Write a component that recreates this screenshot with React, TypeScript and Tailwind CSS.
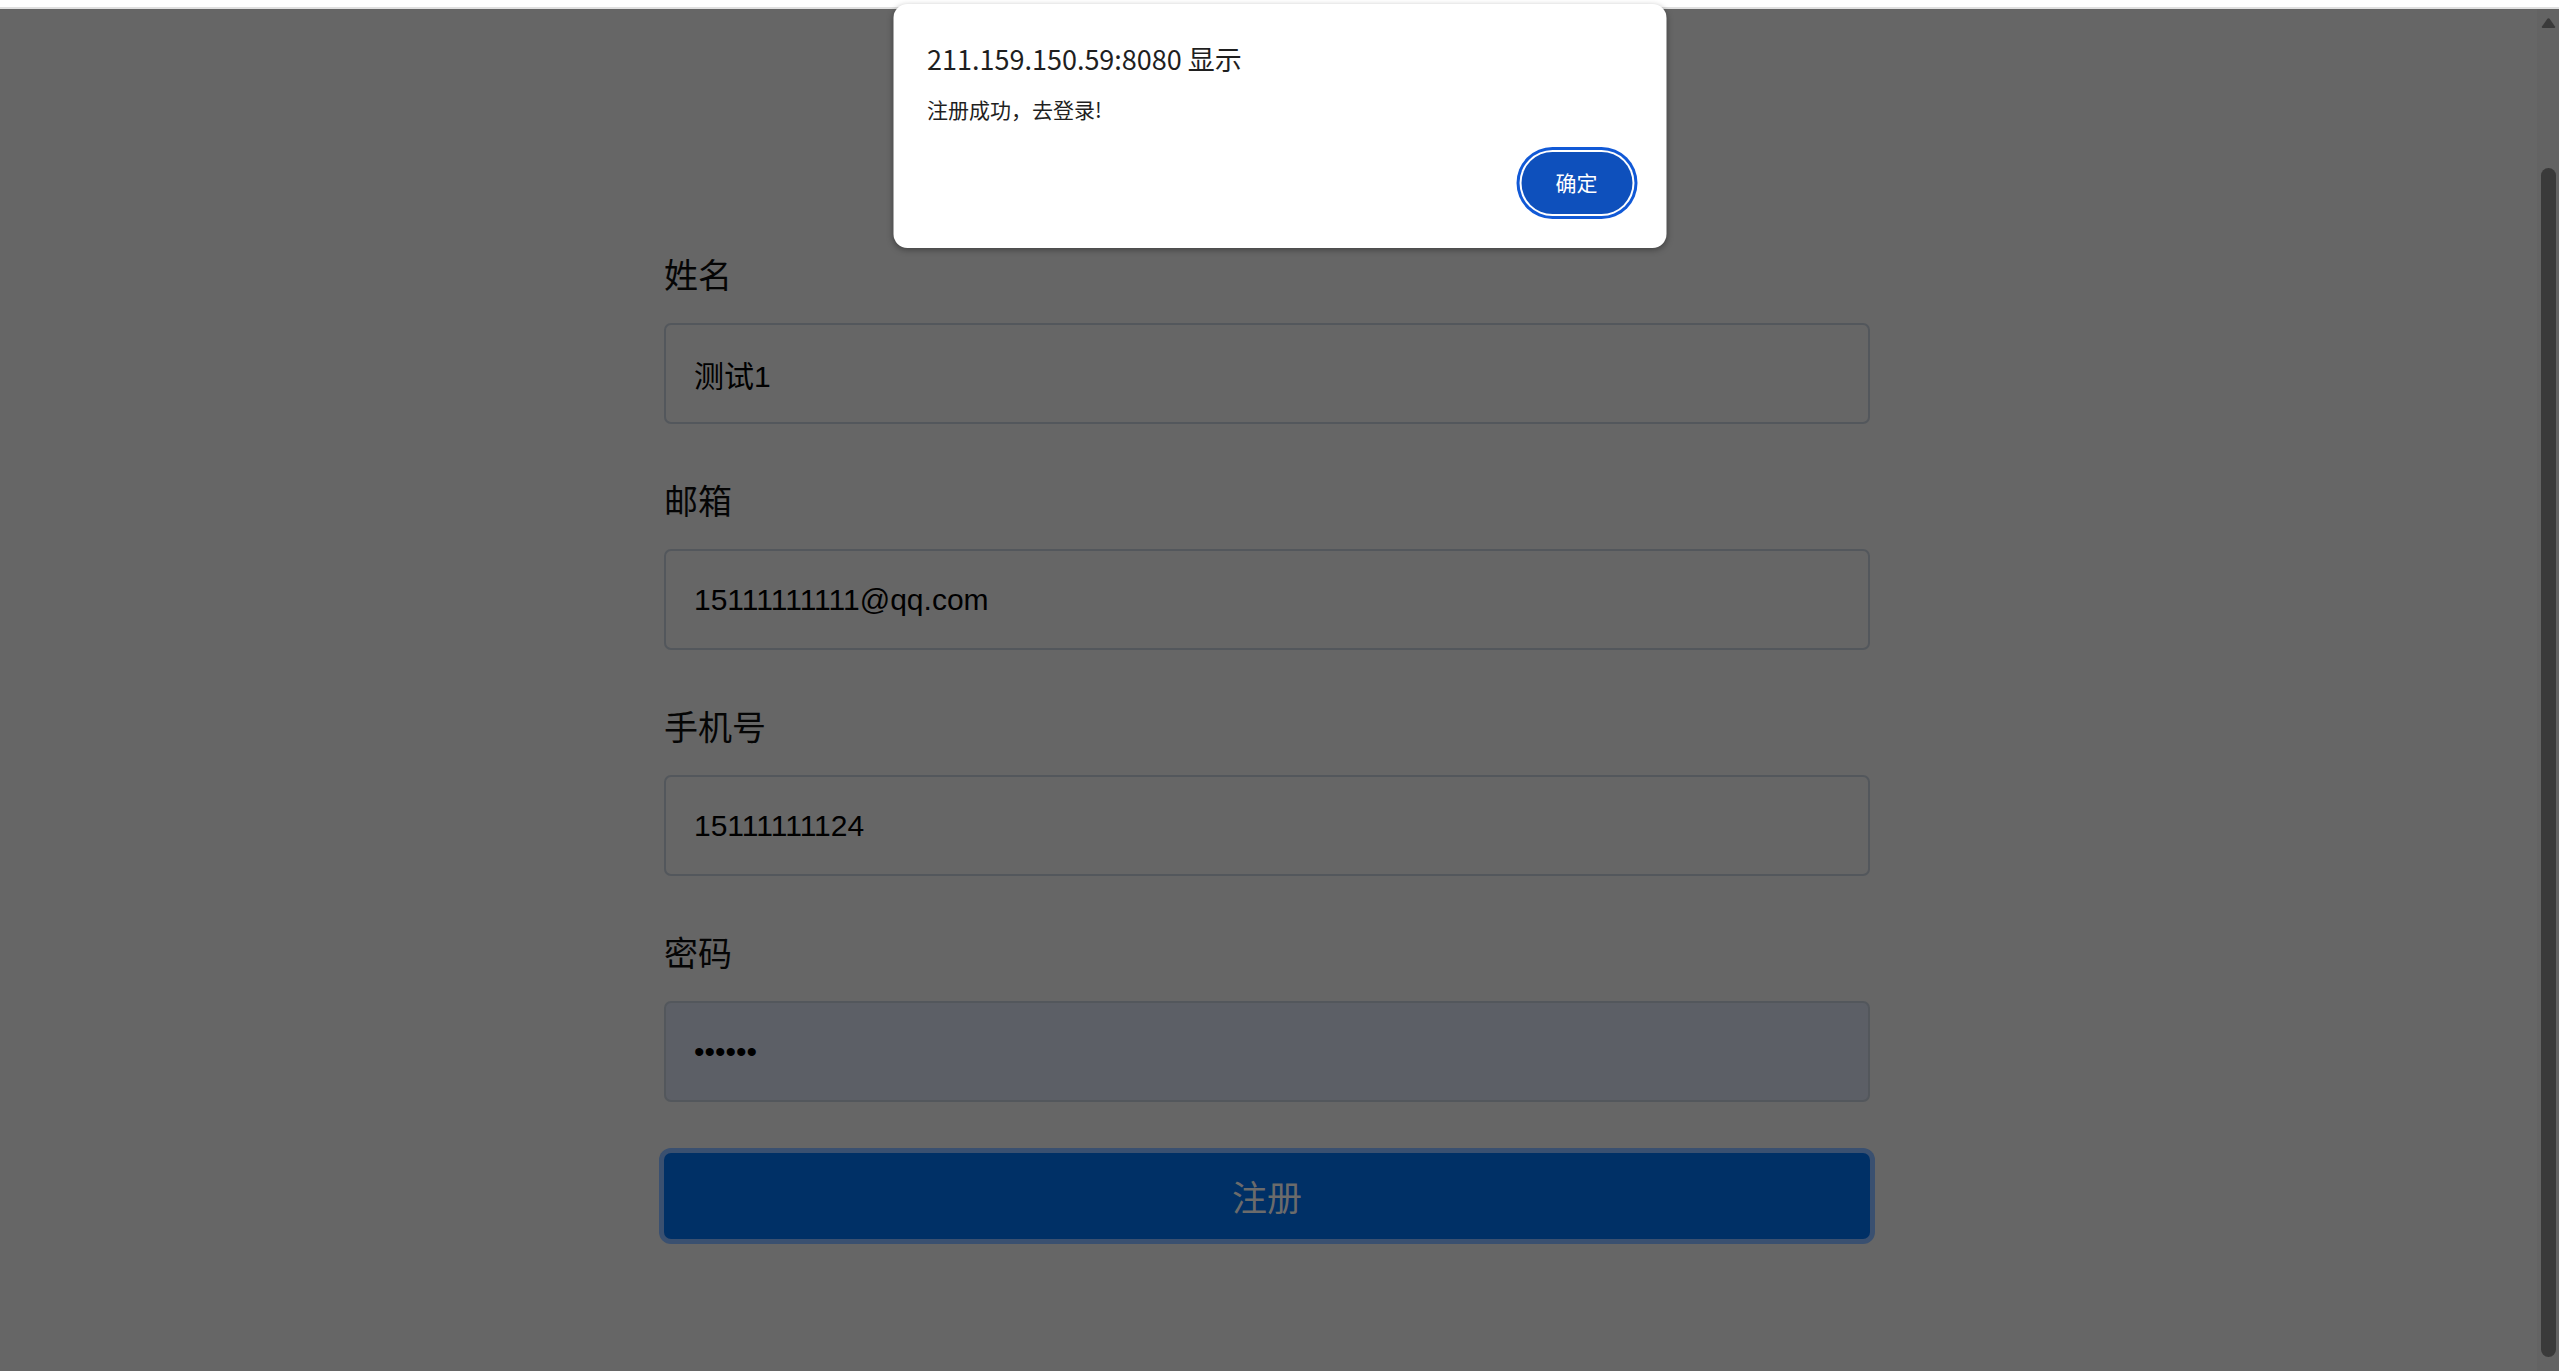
import React from "react";

const fields = [
  { label: "姓名", type: "text", value: "测试1" },
  { label: "邮箱", type: "email", value: "15111111111@qq.com" },
  { label: "手机号", type: "tel", value: "15111111124" },
  { label: "密码", type: "password", value: "123456", autofill: true },
];

const ScrollUpArrow = () => (
  <svg width="15" height="12" viewBox="0 0 15 12">
    <path
      d="M7.5 1.2 Q8.2 1.2 8.8 2 L14 9.6 Q14.8 11 13.3 11 L1.7 11 Q0.2 11 1 9.6 L6.2 2 Q6.8 1.2 7.5 1.2 Z"
      fill="#3a3a3a"
    />
  </svg>
);

const AlertDialog = () => {
  return (
    <div className="absolute left-1/2 top-[4px] -translate-x-1/2 w-[773px] h-[244px] bg-white rounded-[14px] shadow-[0_2px_6px_rgba(0,0,0,0.35)] pl-[34px] pr-[34px] pt-[38px] flex flex-col font-['Noto_Sans_CJK_SC','Noto_Sans',sans-serif]">
      <div className="text-[27px] leading-[34px] text-[#1f1f1f]">211.159.150.59:8080 显示</div>
      <div className="mt-[19px] text-[21px] leading-[28px] text-[#1f1f1f]">注册成功，去登录!</div>
      <div className="mt-[29px] flex justify-end">
        <button className="w-[111px] h-[62px] rounded-full bg-[#0e50bc] text-white text-[21px] ring-[3px] ring-[#1159d6] ring-offset-2 ring-offset-white">
          确定
        </button>
      </div>
    </div>
  );
};

export default function App() {
  return (
    <div className="relative h-[1371px] w-full overflow-hidden bg-[#666666] flex flex-col">
      <div className="h-[9px] shrink-0 bg-white border-b-2 border-[#e0e0e0]" />

      <div className="flex flex-1 min-h-0">
        <main className="flex-1 flex justify-center pt-[244px] pr-[3px]">
          <form className="w-[1206px] flex flex-col" onSubmit={(e) => e.preventDefault()}>
            <div className="flex flex-col gap-[55px]">
              {fields.map((f) => (
                <div key={f.label} className="flex flex-col">
                  <label className="text-[34px] leading-[42px] text-[#050505] mb-[28px] font-['Noto_Sans_CJK_SC','Noto_Sans',sans-serif]">
                    {f.label}
                  </label>
                  <input
                    type={f.type}
                    value={f.value}
                    readOnly
                    className={`h-[101px] w-full border-2 border-[#53575c] rounded-[7px] px-[28px] text-[30px] text-black outline-none font-['Liberation_Sans','Noto_Sans_CJK_SC',sans-serif] ${
                      f.autofill ? "bg-[#5c5f66]" : "bg-transparent"
                    }`}
                  />
                </div>
              ))}
            </div>

            <button
              type="submit"
              className="mt-[51px] h-[86px] w-full rounded-[7px] bg-[#003066] shadow-[0_0_0_5px_#3a5070] text-[35px] text-[#6b6b6b] font-['Noto_Sans_CJK_SC','Noto_Sans',sans-serif]"
            >
              注册
            </button>
          </form>
        </main>

        <div className="w-[22px] shrink-0 bg-[#636363] flex flex-col items-center pt-[8px]">
          <ScrollUpArrow />
          <div className="mt-[139px] w-[15px] h-[1189px] rounded-full bg-[#3a3a3a]" />
        </div>
      </div>

      <AlertDialog />
    </div>
  );
}
